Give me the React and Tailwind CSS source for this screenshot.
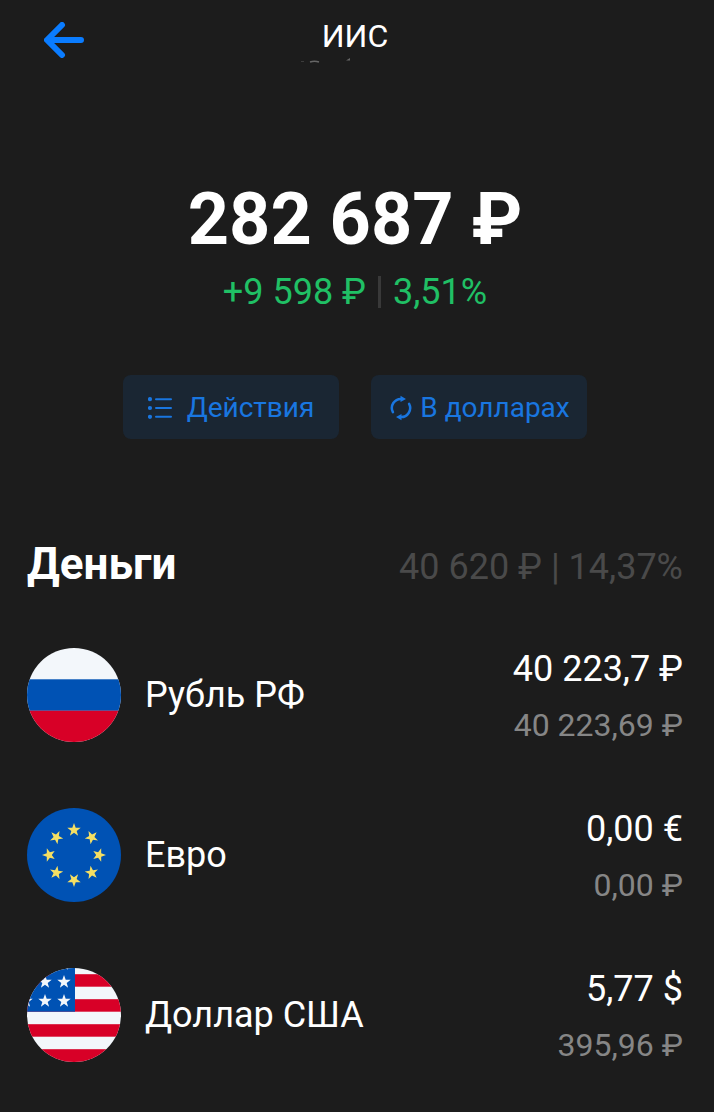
const STAR =
  "M0 -7 L1.7 -2.2 L6.7 -2.2 L2.7 0.9 L4.1 5.7 L0 2.8 L-4.1 5.7 L-2.7 0.9 L-6.7 -2.2 L-1.7 -2.2 Z";

const EURO_ANGLES = [0, 45, 90, 135, 180, 225, 270, 315];

const USA_STARS = [
  [18, 14],
  [37, 14],
  [-1, 33],
  [18, 33],
  [37, 33],
  [37, -4],
];

const ACCOUNTS = [
  { id: "rub", name: "Рубль РФ", amount: "40 223,7 ₽", value: "40 223,69 ₽", Flag: RussiaFlag },
  { id: "eur", name: "Евро", amount: "0,00 €", value: "0,00 ₽", Flag: EuroFlag },
  { id: "usd", name: "Доллар США", amount: "5,77 $", value: "395,96 ₽", Flag: UsaFlag },
];

function RussiaFlag() {
  return (
    <svg viewBox="0 0 94 94" className="size-full" aria-hidden="true">
      <rect width="94" height="94" fill="#f3f7fb" />
      <rect y="31.3" width="94" height="31.5" fill="#0052b4" />
      <rect y="62.7" width="94" height="31.5" fill="#d80027" />
    </svg>
  );
}

function EuroFlag() {
  return (
    <svg viewBox="0 0 94 94" className="size-full" aria-hidden="true">
      <rect width="94" height="94" fill="#0052b4" />
      {EURO_ANGLES.map((angle) => (
        <path
          key={angle}
          d={STAR}
          transform={`rotate(${angle} 47 47) translate(47 22)`}
          fill="#f5df63"
        />
      ))}
    </svg>
  );
}

function UsaFlag() {
  return (
    <svg viewBox="0 0 94 94" className="size-full" aria-hidden="true">
      <rect width="94" height="94" fill="#f3f7fb" />
      {[6.2, 31.2, 56.2, 81.2].map((y) => (
        <rect key={y} y={y} width="94" height={y > 80 ? 13 : 12.5} fill="#d80027" />
      ))}
      <rect width="48" height="43.7" fill="#0052b4" />
      {USA_STARS.map(([x, y]) => (
        <path key={`${x}-${y}`} d={STAR} transform={`translate(${x} ${y})`} fill="#f3f7fb" />
      ))}
    </svg>
  );
}

function BackIcon() {
  return (
    <svg
      viewBox="0 0 40 36"
      className="h-9 w-10"
      fill="none"
      stroke="#0a7cff"
      strokeWidth="6"
      strokeLinecap="round"
      strokeLinejoin="round"
      aria-hidden="true"
    >
      <path d="M37 18H4M18 3L3 18L18 33" />
    </svg>
  );
}

function ListIcon() {
  return (
    <svg viewBox="0 0 24 22" className="h-[22px] w-6" fill="none" aria-hidden="true">
      <g fill="#1976e0">
        <circle cx="2" cy="2.2" r="2.1" />
        <circle cx="2" cy="11" r="2.1" />
        <circle cx="2" cy="19.8" r="2.1" />
      </g>
      <path
        d="M8 2.2H23M8 11H23M8 19.8H23"
        stroke="#1976e0"
        strokeWidth="2"
        strokeLinecap="round"
      />
    </svg>
  );
}

function SwapIcon() {
  return (
    <svg viewBox="0 0 22 26" className="h-[26px] w-[22px]" fill="none" aria-hidden="true">
      <path
        d="M2.9 17.2A9.1 9.1 0 0 1 11.5 3.9M19.1 8.8A9.1 9.1 0 0 1 10.5 22.1"
        stroke="#1976e0"
        strokeWidth="2.5"
        strokeLinecap="round"
      />
      <path d="M10.5 0.8L16 3.9L10.5 7ZM11.5 19L6 22.1L11.5 25.2Z" fill="#1976e0" />
    </svg>
  );
}

export default function App() {
  return (
    <main className="min-h-screen bg-[#1c1c1c] pr-[31px] pl-[27px] font-[Roboto,sans-serif] text-white">
      <header className="grid h-[74px] grid-cols-[1fr_auto_1fr] items-start pt-4">
        <button aria-label="Назад" className="mt-1.5 ml-[17px] w-fit">
          <BackIcon />
        </button>
        <div className="flex flex-col items-center">
          <h1 className="text-[32px] leading-10">ИИС</h1>
          {/* верхний край строки, уходящей под шапку */}
          <svg viewBox="0 0 110 8" className="h-2 w-[110px]" fill="none" aria-hidden="true">
            <path d="M1 5.5H4" stroke="#3c3c3c" strokeWidth="1" />
            <path d="M10 6Q14.5 4.6 19 6" stroke="#666666" strokeWidth="1.5" />
            <path d="M46 4.5L50 2V4.5Z" fill="#666666" />
          </svg>
        </div>
      </header>

      <section className="flex flex-col items-center pt-[104px]">
        <p className="text-[72px] leading-[84px] font-bold">282 687 ₽</p>
        <p className="mt-2 flex items-center text-[36px] leading-11 text-[#20c065]">
          +9 598 ₽
          <span className="mx-3 h-8 w-[3px] bg-[#393939]" />
          3,51%
        </p>
        <div className="mt-[61px] flex gap-8">
          <button className="flex h-16 w-[216px] items-center justify-center gap-[15px] rounded-lg bg-[#1a2633] pt-0.5 text-[28px] text-[#1976e0]">
            <ListIcon />
            Действия
          </button>
          <button className="flex h-16 w-[216px] items-center justify-center gap-2 rounded-lg bg-[#1a2633] pt-0.5 pl-0.5 text-[28px] text-[#1976e0]">
            <SwapIcon />
            В долларах
          </button>
        </div>
      </section>

      <section className="pt-[97px]">
        <div className="flex items-baseline justify-between">
          <h2 className="text-[44px] leading-14 font-bold">Деньги</h2>
          <p className="text-[36px] leading-14 text-[#4a4a4a]">40 620 ₽ | 14,37%</p>
        </div>
        <ul className="pt-5">
          {ACCOUNTS.map(({ id, name, amount, value, Flag }) => (
            <li key={id} className="flex h-40 items-center gap-6">
              <div className="size-[94px] shrink-0 overflow-hidden rounded-full">
                <Flag />
              </div>
              <p className="flex-1 text-[36px]">{name}</p>
              <div className="pt-1 text-right">
                <p className="text-[36px] leading-14">{amount}</p>
                <p className="text-[32px] leading-14 text-[#868686]">{value}</p>
              </div>
            </li>
          ))}
        </ul>
      </section>
    </main>
  );
}
